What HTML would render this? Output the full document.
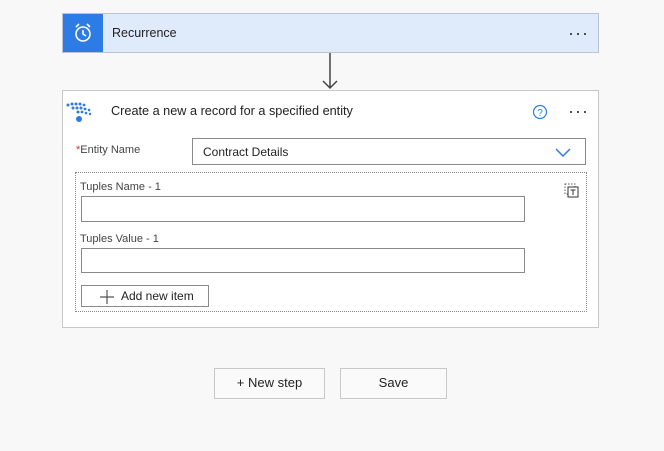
<!DOCTYPE html>
<html><head><style>
*{box-sizing:border-box;margin:0;padding:0}
body{width:664px;height:451px;background:#f8f8f8;font-family:"Segoe UI","Liberation Sans",sans-serif;font-size:12px;color:#222;position:relative;overflow:hidden}
.abs{position:absolute}
.card1{left:62px;top:13px;width:537px;height:40px;background:#dfeafb;border:1px solid #b8c4d4}
.ico{left:0;top:0;width:40px;height:38px;background:#2d7be5}
.dots{font-size:18px;letter-spacing:1px;color:#333}
.card2{left:62px;top:90px;width:537px;height:238px;background:#fff;border:1px solid #c8c8c8}
.inp{background:#fff;border:1px solid #8a8a8a}
.btn{background:#fafafa;border:1px solid #c8c8c8;text-align:center;font-size:13px;line-height:28px;color:#222}
</style></head><body>
<div class="abs card1">
 <div class="abs ico"><svg width="40" height="38" viewBox="0 0 40 38"><g fill="none" stroke="#fff" stroke-width="1.6"><circle cx="20" cy="20" r="7"/><path d="M20 16v4l3 2M13 13l3-3M27 13l-3-3"/></g></svg></div>
 <div class="abs" style="left:49px;top:12px;font-size:12.5px">Recurrence</div>
 <div class="abs dots" style="left:505px;top:9px">···</div>
</div>
<svg class="abs" style="left:320px;top:53px" width="20" height="38"><path d="M10 0v35M3 28l7 7 7-7" stroke="#444" stroke-width="1.5" fill="none"/></svg>
<div class="abs card2">
 <svg class="abs" style="left:2px;top:9px" width="36" height="24"><g fill="#2d7be5"><circle cx="3" cy="5" r="1.5"/><circle cx="7" cy="4" r="1.5"/><circle cx="11" cy="4" r="1.5"/><circle cx="15" cy="4" r="1.5"/><circle cx="19" cy="5" r="1.4"/><circle cx="8" cy="8" r="1.5"/><circle cx="12" cy="8" r="1.5"/><circle cx="16" cy="8" r="1.5"/><circle cx="20" cy="9" r="1.4"/><circle cx="24" cy="10" r="1.3"/><circle cx="13" cy="12" r="1.5"/><circle cx="17" cy="12" r="1.4"/><circle cx="21" cy="13" r="1.3"/><circle cx="25" cy="14" r="1.2"/><circle cx="14" cy="19" r="3"/></g></svg>
 <div class="abs" style="left:48px;top:13px;font-size:12.7px">Create a new a record for a specified entity</div>
 <svg class="abs" style="left:469px;top:13px" width="16" height="16"><circle cx="8" cy="8" r="6.5" fill="none" stroke="#2d7be5" stroke-width="1.2"/><text x="8" y="12" font-size="10" text-anchor="middle" fill="#2d7be5" font-family="Liberation Sans">?</text></svg>
 <div class="abs dots" style="left:505px;top:10px">···</div>
 <div class="abs" style="left:13px;top:53px;font-size:11px;color:#444"><span style="color:#c33">*</span>Entity Name</div>
 <div class="abs inp" style="left:129px;top:47px;width:394px;height:27px;padding:6px 10px;font-size:12px">Contract Details
  <svg class="abs" style="right:14px;top:8px" width="16" height="10"><path d="M1 2l7 7 7-7" stroke="#2d7be5" stroke-width="1.5" fill="none"/></svg></div>
 <div class="abs" style="left:12px;top:81px;width:512px;height:140px;border:1px dotted #888"></div>
 <svg class="abs" style="left:500px;top:91px" width="16" height="16"><rect x="2" y="2" width="10" height="10" fill="none" stroke="#555" stroke-dasharray="1.5 1.5"/><rect x="5" y="5" width="10" height="10" fill="#fff" stroke="#333"/><path d="M7.5 8h5M10 8v5" stroke="#333"/></svg>
 <div class="abs" style="left:17px;top:90px;font-size:11px;color:#444">Tuples Name - 1</div>
 <div class="abs inp" style="left:18px;top:105px;width:444px;height:26px"></div>
 <div class="abs" style="left:17px;top:142px;font-size:11px;color:#444">Tuples Value - 1</div>
 <div class="abs inp" style="left:18px;top:157px;width:444px;height:25px"></div>
 <div class="abs" style="left:18px;top:194px;width:128px;height:22px;border:1px solid #8a8a8a;background:#fff;font-size:12px;padding:3px 0 0 39px">Add new item
  <svg class="abs" style="left:18px;top:4px" width="14" height="14"><path d="M7 0v14M0 7h14" stroke="#555" stroke-width="1.2"/></svg></div>
</div>
<div class="abs btn" style="left:214px;top:368px;width:111px;height:31px">+ New step</div>
<div class="abs btn" style="left:340px;top:368px;width:107px;height:31px">Save</div>
</body></html>
